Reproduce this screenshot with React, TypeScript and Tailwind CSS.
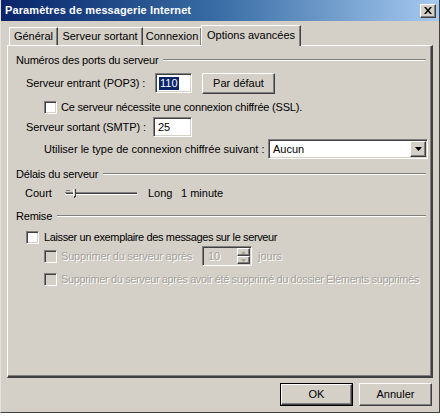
import React from "react";

const sunken =
  "border border-t-[#808080] border-l-[#808080] border-b-white border-r-white shadow-[inset_1px_1px_0_#404040,inset_-1px_-1px_0_#d4d0c8]";
const raised =
  "border border-t-white border-l-white border-b-[#404040] border-r-[#404040] shadow-[inset_-1px_-1px_0_#808080,inset_1px_1px_0_#d4d0c8]";
const disabledText = "text-[#a5a29b] [text-shadow:1px_1px_0_#ffffff]";

function Checkbox({ disabled }: { disabled?: boolean }) {
  return (
    <div
      className={`w-[13px] h-[13px] shrink-0 ${sunken} ${disabled ? "bg-[#d4d0c8]" : "bg-white"}`}
    />
  );
}

function GroupHeader({ title, className }: { title: string; className: string }) {
  return (
    <div className={`flex items-center h-[14px] mr-[5px] ${className}`}>
      <span className="whitespace-nowrap tracking-[-0.2px]">{title}</span>
      <div className="flex-1 ml-[5px] h-[2px] border-t border-t-[#808080] border-b border-b-white" />
    </div>
  );
}

function Tab({ label, w, first }: { label: string; w: string; first?: boolean }) {
  return (
    <div
      className={`${w} h-[18px] flex items-center justify-center border-t border-t-white ${
        first ? "border-l border-l-white" : ""
      } border-r border-r-[#404040] shadow-[inset_-1px_0_0_#808080] whitespace-nowrap`}
    >
      {label}
    </div>
  );
}

export default function App() {
  return (
    <div className="w-[440px] h-[417px] bg-white overflow-hidden font-['Liberation_Sans',Arial,sans-serif] text-[11px] text-black leading-none">
      <div className="h-[413px] bg-[#d4d0c8] flex flex-col border-b border-b-[#404040] border-r border-r-[#404040] border-l border-l-[#e4e2dc]">
        {/* Title bar */}
        <div className="h-[21px] flex items-center pl-[4px] pr-[3px] bg-linear-to-r from-[#0a246a] via-[#3a6ea5] to-[#a6caf0]">
          <span className="text-white font-bold text-[11px] tracking-[0.1px]">
            Paramètres de messagerie Internet
          </span>
          <div className={`ml-auto w-[16px] h-[14px] bg-[#d4d0c8] flex items-center justify-center ${raised}`}>
            <svg width="8" height="7" viewBox="0 0 8 7">
              <path d="M0 0h2l2 2.5L6 0h2L5 3.5 8 7H6L4 4.5 2 7H0l3-3.5z" fill="#000" />
            </svg>
          </div>
        </div>

        {/* Tabs */}
        <div className="mt-[4px] h-[20px] flex items-end pl-[8px]">
          <Tab label="Général" w="w-[49px]" first />
          <Tab label="Serveur sortant" w="w-[85px]" />
          <Tab label="Connexion" w="w-[59px]" />
          <div className="relative z-10 -ml-[1px] -mb-[1px] w-[100px] h-[21px] bg-[#d4d0c8] flex items-center justify-center border-t border-t-white border-l border-l-white border-r border-r-[#404040] shadow-[inset_-1px_0_0_#808080] pb-[2px] whitespace-nowrap">
            Options avancées
          </div>
        </div>

        {/* Panel */}
        <div className="ml-[6px] w-[426px] h-[333px] border-t border-t-white border-l border-l-white border-r-2 border-r-[#404040] border-b-2 border-b-[#404040] shadow-[inset_-1px_-1px_0_#808080] flex flex-col pl-[8px]">
          <GroupHeader title="Numéros des ports du serveur" className="mt-[7px]" />

          <div className="mt-[6px] h-[20px] flex items-center pl-[10px]">
            <span className="w-[129px] whitespace-nowrap tracking-[-0.1px]">Serveur entrant (POP3) :</span>
            <div className={`w-[37px] h-[20px] bg-white flex items-center pl-[3px] ${sunken}`}>
              <span className="bg-[#0a246a] text-white px-[1px] py-[1px]">110</span>
            </div>
            <div className={`ml-[10px] w-[73px] h-[21px] flex items-center justify-center ${raised}`}>
              Par défaut
            </div>
          </div>

          <div className="mt-[7px] h-[14px] flex items-center pl-[28px]">
            <Checkbox />
            <span className="ml-[4px] whitespace-nowrap tracking-[-0.2px]">
              Ce serveur nécessite une connexion chiffrée (SSL).
            </span>
          </div>

          <div className="mt-[3px] h-[20px] flex items-center pl-[10px]">
            <span className="w-[127px] whitespace-nowrap tracking-[-0.1px]">Serveur sortant (SMTP) :</span>
            <div className={`w-[39px] h-[20px] bg-white flex items-center pl-[4px] ${sunken}`}>25</div>
          </div>

          <div className="mt-[2px] h-[20px] flex items-center pl-[28px] mr-[3px]">
            <span className="whitespace-nowrap">Utiliser le type de connexion chiffrée suivant :</span>
            <div className={`ml-auto w-[160px] h-[20px] bg-white flex items-center pl-[4px] pr-[1px] ${sunken}`}>
              <span>Aucun</span>
              <div className={`ml-auto w-[16px] h-[16px] bg-[#d4d0c8] flex items-center justify-center ${raised}`}>
                <svg width="7" height="4" viewBox="0 0 7 4">
                  <path d="M0 0h7L3.5 4z" fill="#000" />
                </svg>
              </div>
            </div>
          </div>

          <GroupHeader title="Délais du serveur" className="mt-[8px]" />

          <div className="mt-[5px] h-[14px] flex items-center pl-[9px]">
            <span className="w-[40px]">Court</span>
            <svg width="74" height="12" viewBox="0 0 74 12" className="shrink-0">
              <line x1="0" y1="5.5" x2="72" y2="5.5" stroke="#808080" />
              <line x1="1" y1="6.5" x2="72" y2="6.5" stroke="#404040" />
              <line x1="0" y1="7.5" x2="73" y2="7.5" stroke="#ffffff" />
              <line x1="1" y1="3.5" x2="5" y2="3.5" stroke="#808080" />
              <rect x="8" y="2" width="3" height="8" fill="#d4d0c8" />
              <line x1="8.5" y1="2" x2="8.5" y2="9" stroke="#ffffff" />
              <line x1="10.5" y1="2" x2="10.5" y2="10" stroke="#404040" />
              <line x1="9.5" y1="9" x2="9.5" y2="11" stroke="#404040" />
            </svg>
            <span className="ml-[9px] w-[33px]">Long</span>
            <span>1 minute</span>
          </div>

          <GroupHeader title="Remise" className="mt-[9px]" />

          <div className="mt-[7px] h-[14px] flex items-center pl-[10px]">
            <Checkbox />
            <span className="ml-[5px] whitespace-nowrap tracking-[-0.37px]">
              Laisser un exemplaire des messages sur le serveur
            </span>
          </div>

          <div className="mt-[2px] h-[20px] flex items-center pl-[28px]">
            <Checkbox disabled />
            <span className={`ml-[4px] w-[141px] whitespace-nowrap tracking-[-0.2px] ${disabledText}`}>
              Supprimer du serveur après
            </span>
            <div className={`w-[50px] h-[20px] bg-[#d4d0c8] flex items-center pl-[5px] pr-[1px] ${sunken}`}>
              <span className={disabledText}>10</span>
              <div className="ml-auto flex flex-col">
                <div className={`w-[13px] h-[8px] flex items-center justify-center ${raised}`}>
                  <svg width="5" height="3" viewBox="0 0 5 3">
                    <path d="M0 3h5L2.5 0z" fill="#a5a29b" />
                  </svg>
                </div>
                <div className={`w-[13px] h-[8px] flex items-center justify-center ${raised}`}>
                  <svg width="5" height="3" viewBox="0 0 5 3">
                    <path d="M0 0h5L2.5 3z" fill="#a5a29b" />
                  </svg>
                </div>
              </div>
            </div>
            <span className={`ml-[6px] ${disabledText}`}>jours</span>
          </div>

          <div className="mt-[6px] h-[14px] flex items-center pl-[28px]">
            <Checkbox disabled />
            <span className={`ml-[4px] whitespace-nowrap tracking-[-0.38px] ${disabledText}`}>
              Supprimer du serveur après avoir été supprimé du dossier Éléments supprimés
            </span>
          </div>
        </div>

        {/* Buttons */}
        <div className="mt-[5px] flex justify-end pr-[7px] gap-[6px]">
          <div className="w-[73px] h-[23px] border border-black">
            <div className={`w-full h-full flex items-center justify-center ${raised}`}>OK</div>
          </div>
          <div className={`w-[73px] h-[23px] flex items-center justify-center ${raised}`}>Annuler</div>
        </div>
      </div>
    </div>
  );
}
